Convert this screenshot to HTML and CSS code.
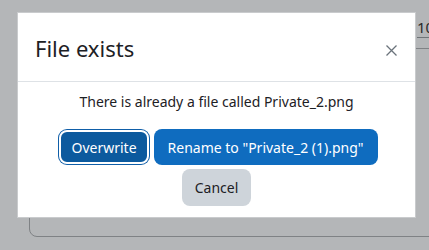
FILE: index.html
```html
<!DOCTYPE html>
<html>
<head>
<meta charset="utf-8">
<link rel="stylesheet" href="styles.css">
</head>
<body>
<div class="page">
  <div class="topbar"><span class="num">10</span></div>
  <div class="panel"></div>
</div>
<div class="modal">
  <div class="modal-header">
    <h5 class="modal-title">File exists</h5>
    <span class="close" aria-label="Close"><svg width="11" height="11" viewBox="0 0 11 11"><path d="M0.5 0.5 L10.5 10.5 M10.5 0.5 L0.5 10.5" stroke="#6a737b" stroke-width="1.3" fill="none"/></svg></span>
  </div>
  <div class="modal-body">
    <p class="msg">There is already a file called Private_2.png</p>
    <div class="actions">
      <div class="row row-main">
        <button class="btn btn-dark-primary">Overwrite</button>
        <button class="btn btn-primary">Rename to "Private_2 (1).png"</button>
      </div>
      <div class="row">
        <button class="btn btn-secondary">Cancel</button>
      </div>
    </div>
  </div>
</div>
</body>
</html>
```

FILE: styles.css
```css
html, body {
  margin: 0;
  padding: 0;
}
body {
  width: 429px;
  height: 250px;
  overflow: hidden;
  background: #b4b6b8;
  font-family: "Noto Sans", "Open Sans", sans-serif;
  color: #1d2125;
  position: relative;
}
.page {
  display: flex;
  flex-direction: column;
}
.topbar {
  display: flex;
  justify-content: flex-end;
  height: 38px;
}
.num {
  width: 12px;
  overflow: hidden;
  white-space: nowrap;
  font-size: 15px;
  line-height: 15px;
  padding-top: 20px;
  border-bottom: 1px solid #6f7477;
  color: #2a2a2a;
}
.panel {
  margin-left: 29px;
  margin-top: 10px;
  height: 187px;
  width: 500px;
  border: 1.5px solid #7f8285;
  border-radius: 8px;
}
.modal {
  position: absolute;
  left: 17px;
  top: 12px;
  width: 399px;
  height: 206px;
  background: #fff;
  border: 1px solid #c9cbcd;
  box-sizing: border-box;
  display: flex;
  flex-direction: column;
}
.modal-header {
  display: flex;
  align-items: center;
  justify-content: space-between;
  height: 69px;
  padding: 0 18px 0 17px;
  border-bottom: 1px solid #dee2e6;
  box-sizing: border-box;
}
.modal-title {
  margin: 0;
  font-weight: 400;
  font-size: 22px;
  line-height: 28px;
  padding-top: 2px;
}
.close {
  display: flex;
  padding-top: 6px;
}
.modal-body {
  display: flex;
  flex-direction: column;
  align-items: center;
  padding-top: 10px;
}
.msg {
  margin: 0;
  font-size: 14px;
  line-height: 20px;
}
.actions {
  display: flex;
  flex-direction: column;
  align-items: center;
  gap: 4px;
  margin-top: 17px;
}
.row {
  display: flex;
  gap: 5px;
}
.row-main {
  padding-left: 3px;
}
.btn {
  font-family: inherit;
  font-size: 14px;
  height: 36px;
  border: none;
  border-radius: 8px;
  padding: 0 13px;
  cursor: pointer;
}
.btn-primary {
  background: #0f6cbf;
  color: #fff;
  padding: 0 14px;
}
.btn-dark-primary {
  background: #0c5a9e;
  color: #fff;
  border: 2px solid #fff;
  box-shadow: 0 0 0 1px #0f5ea8;
  margin: 1px 0 1px 1px;
  height: 34px;
  padding: 0 10px;
}
.btn-secondary {
  background: #ced4da;
  color: #1d2125;
  height: 37px;
  padding: 0 13px;
}
```
